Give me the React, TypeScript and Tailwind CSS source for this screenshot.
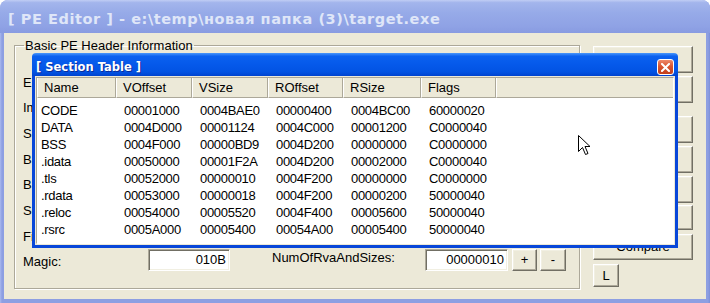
import React from "react";

const btn =
  "flex items-center justify-center bg-[#ece9d8] border border-t-white border-l-white border-r-[#716f64] border-b-[#716f64] shadow-[inset_-1px_-1px_0_#aca899,inset_1px_1px_0_#f1efe2]";
const edit =
  "flex items-center justify-end pr-[3px] h-[22px] bg-white border border-t-[#aca899] border-l-[#aca899] border-r-white border-b-white shadow-[inset_1px_1px_0_#716f64,inset_-1px_-1px_0_#f1efe2]";

// rows behind the dialog: only the left labels peek out, the rest is covered
const fields = [
  ["EntryPoint:", "", "", ""],
  ["ImageBase:", "", "", ""],
  ["SizeOfImage:", "", "", ""],
  ["BaseOfCode:", "", "", ""],
  ["BaseOfData:", "", "", ""],
  ["SectionAlignment:", "", "", ""],
  ["FileAlignment:", "", "", ""],
  ["Magic:", "010B", "NumOfRvaAndSizes:", "00000010"],
];

const cols = [
  { name: "Name", w: "w-[79px]", pad: "pl-[4px]" },
  { name: "VOffset", w: "w-[76px]", pad: "pl-[8px]" },
  { name: "VSize", w: "w-[76px]", pad: "pl-[8px]" },
  { name: "ROffset", w: "w-[75px]", pad: "pl-[8px]" },
  { name: "RSize", w: "w-[78px]", pad: "pl-[8px]" },
  { name: "Flags", w: "w-[75px]", pad: "pl-[8px]" },
];

const sections = [
  ["CODE", "00001000", "0004BAE0", "00000400", "0004BC00", "60000020"],
  ["DATA", "0004D000", "00001124", "0004C000", "00001200", "C0000040"],
  ["BSS", "0004F000", "00000BD9", "0004D200", "00000000", "C0000000"],
  [".idata", "00050000", "00001F2A", "0004D200", "00002000", "C0000040"],
  [".tls", "00052000", "00000010", "0004F200", "00000000", "C0000000"],
  [".rdata", "00053000", "00000018", "0004F200", "00000200", "50000040"],
  [".reloc", "00054000", "00005520", "0004F400", "00005600", "50000040"],
  [".rsrc", "0005A000", "00005400", "00054A00", "00005400", "50000040"],
];

export default function App() {
  return (
    <div className="relative w-[710px] h-[303px] bg-white overflow-hidden font-['Liberation_Sans',Arial,sans-serif] text-[13px] text-black">
      {/* PE Editor window (inactive) */}
      <div className="flex flex-col w-full h-full rounded-t-[8px] overflow-hidden bg-[linear-gradient(to_right,#aab9ee,#8d9fe2_2px,#8d9fe2_calc(100%-2px),#7b8ed8)]">
        <div className="h-[33px] shrink-0 flex items-start pt-[10px] pl-[8px] bg-[linear-gradient(to_bottom,#c0cdf4_0%,#a3b5ec_8%,#96aae8_40%,#8fa2e5_80%,#889be1_100%)]">
          <span className="font-['DejaVu_Sans',sans-serif] font-bold text-[14.5px] tracking-[0.55px] leading-[18px] text-[#dfe6f8] whitespace-nowrap">
            [ PE Editor ] - e:\temp\новая папка (3)\target.exe
          </span>
        </div>

        <div className="flex items-start h-[266px] mx-[4px] bg-[#ece9d8] pl-[10px]">
          <fieldset className="mt-[5px] w-[566px] h-[251px] px-0 border border-[#aca899] shadow-[inset_1px_1px_0_#fff,1px_1px_0_#fff]">
            <legend className="ml-[9px] px-[1px] leading-[15px]">Basic PE Header Information</legend>
            <div className="flex flex-col gap-[3.7px] pt-[16px] pl-[8px]">
              {fields.map((f, i) => (
                <div key={i} className="flex items-center h-[22px]">
                  <span className="w-[125px] pt-[4px] leading-[15px] whitespace-nowrap">{f[0]}</span>
                  <div className={`${edit} w-[82px]`}>{f[1]}</div>
                  <span className="w-[42px]" />
                  <span className="w-[153px] pb-[4px] leading-[15px] whitespace-nowrap">{f[2]}</span>
                  <div className={`${edit} w-[83px]`}>{f[3]}</div>
                  {i === 7 && (
                    <>
                      <div className={`${btn} ml-[4px] w-[25px] h-[22px]`}>+</div>
                      <div className={`${btn} ml-[3px] w-[26px] h-[22px]`}>-</div>
                    </>
                  )}
                </div>
              ))}
            </div>
          </fieldset>

          <div className="flex flex-col ml-[13px] mt-[13px] w-[100px]">
            <div className={`${btn} h-[27px]`} />
            <div className={`${btn} h-[27px] mt-[3px]`} />
            <div className={`${btn} h-[27px] mt-[13px]`} />
            <div className={`${btn} h-[27px] mt-[3px]`} />
            <div className={`${btn} h-[27px] mt-[3px]`} />
            <div className={`${btn} h-[25px] mt-[2px]`} />
            <div className={`${btn} h-[26px] mt-[4px]`}>Compare</div>
            <div className={`${btn} h-[23px] w-[26px] mt-[4px]`}>L</div>
          </div>
        </div>
      </div>

      {/* Section Table dialog (active) */}
      <div className="absolute left-[32px] top-[53px] w-[646px] h-[195px] flex flex-col rounded-t-[4px] overflow-hidden">
        <div className="h-[23px] shrink-0 flex items-start pl-[4px] bg-[linear-gradient(to_bottom,#4a97fb_0%,#0b61ef_14%,#0559ea_50%,#0253e3_82%,#0043cf_100%)]">
          <span className="pt-[7px] font-['DejaVu_Sans',sans-serif] font-bold text-[11.5px] leading-[14px] text-white whitespace-nowrap [text-shadow:1px_1px_0_#0b2d9a]">
            [ Section Table ]
          </span>
          <div className="ml-auto mr-[4px] mt-[6px] w-[17px] h-[16px] rounded-[3px] border border-white flex items-center justify-center bg-[linear-gradient(to_bottom,#ee8a6b,#d9552f_45%,#c2401c)]">
            <svg width="9" height="9" viewBox="0 0 9 9">
              <path d="M1 1 L8 8 M8 1 L1 8" stroke="#fff" strokeWidth="2" strokeLinecap="square" />
            </svg>
          </div>
        </div>
        <div className="flex-1 flex flex-col p-[1px] bg-[#ece9d8] border-x-[3px] border-b-[3px] border-[#0847d9]">
          <div className="flex-1 flex flex-col bg-white border border-t-[#aca899] border-l-[#aca899] border-r-white border-b-white">
            <div className="flex h-[20px] shrink-0 bg-[#ece9d8]">
              {cols.map((c) => (
                <div
                  key={c.name}
                  className={`${c.w} flex items-center pt-[1px] pl-[6px] border-l border-l-white border-r border-r-[#aca899] border-b border-b-[#aca899]`}
                >
                  {c.name}
                </div>
              ))}
              <div className="flex-1 border-l border-l-white border-b border-b-[#aca899]" />
            </div>
            <div className="flex flex-col pt-[4px]">
              {sections.map((r) => (
                <div key={r[0]} className="flex leading-[17px] tracking-[-0.3px]">
                  {r.map((v, j) => (
                    <span key={j} className={`${cols[j].w} ${cols[j].pad} whitespace-nowrap`}>
                      {v}
                    </span>
                  ))}
                </div>
              ))}
            </div>
          </div>
        </div>
      </div>

      {/* mouse pointer */}
      <svg className="absolute left-[578px] top-[135px]" width="13" height="21" viewBox="0 0 13 21">
        <path
          d="M0.5 0.5 L0.5 16.5 L4.5 12.5 L7.5 19.5 L10 18.5 L7 11.5 L12 11.5 Z"
          fill="#fff"
          stroke="#000"
          strokeWidth="1"
          strokeLinejoin="miter"
        />
      </svg>
    </div>
  );
}
